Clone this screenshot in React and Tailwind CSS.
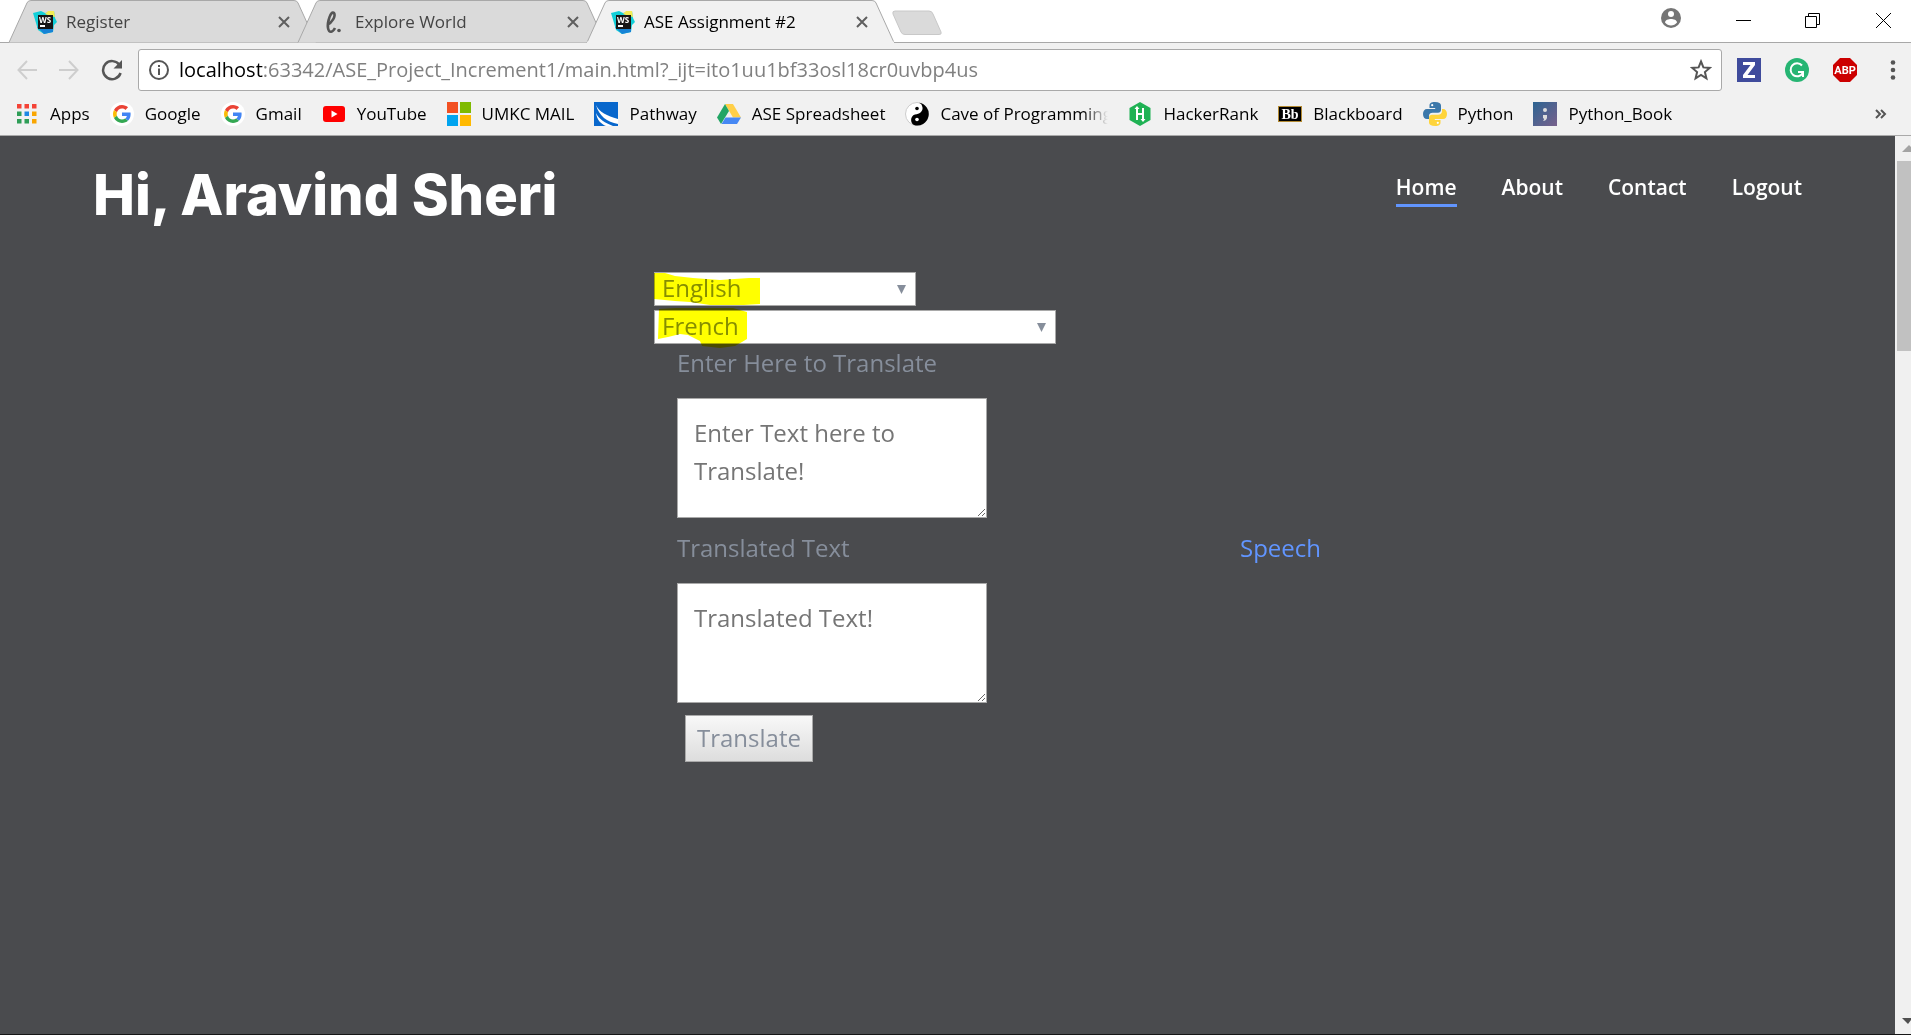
import React from "react";

function WebStormIcon() {
  return (
    <svg viewBox="0 0 24 24" className="size-6 shrink-0" aria-hidden="true">
      <path d="M0 3L8 1L12 3L21 1L22 8L24 12L21 15L20 22L11 24L5 20L3 13Z" fill="#12cfd8" />
      <path d="M12 4L15 1L21 1L22 7L18 6Z" fill="#f3ec54" />
      <path d="M4 17L11 24L20 22L20 16Z" fill="#1783d6" />
      <rect x="5" y="5" width="15" height="14" fill="#161616" />
      <text x="6" y="13" fontSize="8" fontWeight="bold" fontFamily="Open Sans, sans-serif" fill="#fff">WS</text>
      <rect x="7" y="15" width="5" height="2" fill="#fff" />
    </svg>
  );
}

function CloseX() {
  return (
    <svg viewBox="0 0 12 12" className="size-3" aria-hidden="true">
      <path d="M1 1L11 11M11 1L1 11" stroke="#5f5f5f" strokeWidth="2" fill="none" />
    </svg>
  );
}

function TabShape({ active }) {
  return (
    <svg viewBox="0 0 310 43" preserveAspectRatio="none" className="absolute inset-0 size-full" aria-hidden="true">
      <path d="M1 42.5L19 3Q20 .5 23 .5L287 .5Q290 .5 291 3L309 42.5" fill={active ? "#f1f1f1" : "#dadada"} stroke="#a8a8a8" />
      {active && <path d="M1 42.5H309" stroke="#f1f1f1" strokeWidth="2" />}
    </svg>
  );
}

function Tab({ title, icon, active }) {
  return (
    <div className={active ? "relative z-10 -ml-5 h-[43px] w-[309px]" : "relative -ml-5 h-[43px] w-[309px]"}>
      <TabShape active={active} />
      <div className="relative flex h-full items-center gap-[9px] pr-[27px] pl-[25px]">
        {icon}
        <span className={active ? "flex-1 text-[17px] text-black" : "flex-1 text-[17px] text-[#444]"}>{title}</span>
        <button type="button" aria-label={"Close " + title}><CloseX /></button>
      </div>
    </div>
  );
}

function TabStrip() {
  return (
    <div className="flex h-[43px] items-start border-b border-[#a8a8a8] bg-white pl-7">
      <Tab title="Register" icon={<WebStormIcon />} />
      <Tab
        title="Explore World"
        icon={
          <svg viewBox="0 0 24 24" className="size-6 shrink-0" aria-hidden="true">
            <path d="M5 15C10 13 14 6 12 3C9 0 5 12 6 18C7 24 11 22 13 18" fill="none" stroke="#555" strokeWidth="2.600" />
            <circle cx="17" cy="20.500" r="1.800" fill="#555" />
          </svg>
        }
      />
      <Tab title="ASE Assignment #2" icon={<WebStormIcon />} active />
      <button type="button" aria-label="New tab" className="mt-[10px] -ml-1">
        <svg viewBox="0 0 52 26" className="h-[26px] w-[52px]" aria-hidden="true">
          <path d="M4 1H38Q41 1 42 4L50 22Q51 24.500 48 24.500H14Q11 24.500 10 22L2 4Q1 1 4 1Z" fill="#dadada" stroke="#c8c8c8" />
        </svg>
      </button>
      <div className="ml-auto flex items-center">
        <button type="button" aria-label="Profile" className="mt-2 mr-[55px]">
          <svg viewBox="0 0 20 20" className="size-5" aria-hidden="true">
            <circle cx="10" cy="10" r="10" fill="#757575" />
            <circle cx="10" cy="6" r="3" fill="#fff" />
            <path d="M4 14.500C4 12 7.500 11 10 11S16 12 16 14.500C14.500 16.600 12.300 17.500 10 17.500S5.500 16.600 4 14.500Z" fill="#fff" />
          </svg>
        </button>
        <button type="button" aria-label="Minimize" className="mt-3 mr-[54px]">
          <svg viewBox="0 0 15 15" className="size-[15px]" aria-hidden="true"><path d="M0 7.500H15" stroke="#000" /></svg>
        </button>
        <button type="button" aria-label="Restore" className="mt-3 mr-14">
          <svg viewBox="0 0 15 15" className="size-[15px]" aria-hidden="true">
            <path d="M.5 3.500H11.500V14.500H.5ZM3.500 3.500V.5H14.500V11.500H11.500" fill="none" stroke="#000" />
          </svg>
        </button>
        <button type="button" aria-label="Close window" className="mt-3 mr-5">
          <svg viewBox="0 0 15 15" className="size-[15px]" aria-hidden="true"><path d="M0 0L15 15M15 0L0 15" stroke="#000" /></svg>
        </button>
      </div>
    </div>
  );
}

function Arrow({ label, d }) {
  return (
    <button type="button" aria-label={label}>
      <svg viewBox="0 0 20 20" className="size-5" aria-hidden="true">
        <path d={d} fill="none" stroke="#cecece" strokeWidth="2" />
      </svg>
    </button>
  );
}

function Toolbar() {
  return (
    <div className="flex items-center pt-[6px] pr-[10px] pl-[17px]">
      <div className="flex gap-[22px]">
        <Arrow label="Back" d="M10 1L1.500 10L10 19M2 10H20" />
        <Arrow label="Forward" d="M10 1L18.500 10L10 19M18 10H0" />
        <button type="button" aria-label="Reload">
          <svg viewBox="0 0 22 22" className="size-[22px]" aria-hidden="true">
            <path d="M18.500 6A9 9 0 1 0 19.600 14" fill="none" stroke="#555" strokeWidth="2.500" />
            <path d="M21 1V9.500H12.500Z" fill="#555" />
          </svg>
        </button>
      </div>
      <div className="ml-[15px] flex h-[42px] flex-1 items-center rounded-[3px] border border-[#a9a9a9] bg-white pr-[9px] pl-[10px]">
        <svg viewBox="0 0 20 20" className="size-5 shrink-0" aria-hidden="true">
          <circle cx="10" cy="10" r="9" fill="none" stroke="#555" strokeWidth="2" />
          <path d="M10 8.500V15M10 5V7" stroke="#555" strokeWidth="2" />
        </svg>
        <a href="#top" className="ml-[10px] flex-1 text-xl text-[#808080]">
          <span className="text-black">localhost</span>:63342/ASE_Project_Increment1/main.html?_ijt=ito1uu1bf33osl18cr0uvbp4us
        </a>
        <button type="button" aria-label="Bookmark this page">
          <svg viewBox="0 0 22 22" className="size-[22px]" aria-hidden="true">
            <path d="M11 2.500L13.400 8.400L19.800 8.900L14.900 13L16.400 19.300L11 15.900L5.600 19.300L7.100 13L2.200 8.900L8.600 8.400Z" fill="none" stroke="#555" strokeWidth="2" />
          </svg>
        </button>
      </div>
      <div className="ml-[15px] flex items-center gap-6">
        <button type="button" aria-label="Zotero">
          <svg viewBox="0 0 24 24" className="size-6" aria-hidden="true">
            <rect width="24" height="24" fill="#3f4b9c" />
            <path d="M6 4H18V7L10.500 17H18V20H6V17L13.500 7H6Z" fill="#fff" />
          </svg>
        </button>
        <button type="button" aria-label="Grammarly">
          <svg viewBox="0 0 24 24" className="size-6" aria-hidden="true">
            <circle cx="12" cy="12" r="12" fill="#26b573" />
            <path d="M17 7.500A6.500 6.500 0 1 0 17.800 15M13 14H18V19" fill="none" stroke="#fff" strokeWidth="2" />
          </svg>
        </button>
        <button type="button" aria-label="Adblock Plus">
          <svg viewBox="0 0 24 24" className="size-6" aria-hidden="true">
            <path d="M7 0H17L24 7V17L17 24H7L0 17V7Z" fill="#cc0000" />
            <text x="12" y="16" textAnchor="middle" fontSize="11" fontWeight="bold" fontFamily="Roboto, sans-serif" fill="#fff">ABP</text>
          </svg>
        </button>
        <button type="button" aria-label="Menu" className="ml-1">
          <svg viewBox="0 0 16 24" className="h-6 w-4" aria-hidden="true">
            <g fill="#555"><circle cx="8" cy="4.500" r="2.300" /><circle cx="8" cy="12" r="2.300" /><circle cx="8" cy="19.500" r="2.300" /></g>
          </svg>
        </button>
      </div>
    </div>
  );
}

function GoogleIcon() {
  return (
    <>
      <circle cx="12" cy="12" r="12" fill="#fff" />
      <g transform="translate(3 3) scale(.375)">
        <path fill="#EA4335" d="M24 9.500c3.540 0 6.710 1.220 9.210 3.600l6.850-6.850C35.900 2.380 30.470 0 24 0 14.620 0 6.510 5.380 2.560 13.220l7.980 6.190C12.430 13.720 17.740 9.500 24 9.500z" />
        <path fill="#4285F4" d="M46.980 24.550c0-1.570-.15-3.090-.38-4.550H24v9.020h12.940c-.58 2.960-2.260 5.480-4.780 7.180l7.730 6c4.510-4.180 7.090-10.360 7.090-17.650z" />
        <path fill="#FBBC05" d="M10.530 28.590c-.48-1.450-.76-2.990-.76-4.590s.27-3.140.76-4.590l-7.980-6.190C.92 16.460 0 20.120 0 24c0 3.880.92 7.540 2.560 10.780l7.970-6.190z" />
        <path fill="#34A853" d="M24 48c6.480 0 11.930-2.130 15.890-5.810l-7.730-6c-2.150 1.450-4.920 2.300-8.160 2.300-6.260 0-11.570-4.220-13.470-9.910l-7.980 6.190C6.510 42.620 14.620 48 24 48z" />
      </g>
    </>
  );
}

const bookmarks = [
  {
    label: "Apps",
    icon: (
      <g>
        <path d="M2 2h4.500v4.500H2zM9.500 2H14v4.500H9.500zM17 2h4.500v4.500H17z" fill="#f44336" />
        <path d="M2 9.500h4.500V14H2zM2 17h4.500v4.500H2zM9.500 17H14v4.500H9.500z" fill="#2f9e57" />
        <path d="M9.500 9.500H14V14H9.500z" fill="#1e88e5" />
        <path d="M17 9.500h4.500V14H17zM17 17h4.500v4.500H17z" fill="#f9a602" />
      </g>
    ),
  },
  { label: "Google", icon: <GoogleIcon /> },
  { label: "Gmail", icon: <GoogleIcon /> },
  {
    label: "YouTube",
    icon: (
      <g>
        <rect x="1" y="4" width="22" height="16" rx="3" fill="#f00" />
        <path d="M9.500 8.500L15.500 12L9.500 15.500Z" fill="#fff" />
      </g>
    ),
  },
  {
    label: "UMKC MAIL",
    icon: (
      <g>
        <path d="M0 0H11V11H0Z" fill="#f25022" />
        <path d="M13 0H24V11H13Z" fill="#7fba00" />
        <path d="M0 13H11V24H0Z" fill="#00a4ef" />
        <path d="M13 13H24V24H13Z" fill="#ffb900" />
      </g>
    ),
  },
  {
    label: "Pathway",
    icon: (
      <g>
        <rect width="24" height="24" fill="#0867cc" />
        <path d="M2 3C5 10 13 14 24 17V22C13 20 5 14 2 3Z" fill="#fff" />
        <path d="M2 11C5 17 11 21 19 24H12C7 22 3 18 2 11Z" fill="#fff" />
      </g>
    ),
  },
  {
    label: "ASE Spreadsheet",
    icon: (
      <g>
        <path d="M8 2H16L24 15.500H16Z" fill="#ffcf48" />
        <path d="M8 2L12 9L4 22L0 15.500Z" fill="#22a565" />
        <path d="M8.500 15.500H24L20 22H4.500Z" fill="#4688f4" />
      </g>
    ),
  },
  {
    label: "Cave of Programming",
    faded: true,
    icon: (
      <g>
        <circle cx="12" cy="12" r="11.500" fill="#fff" stroke="#ccc" />
        <path d="M14 .7A11.500 11.500 0 1 1 9 23.100C5 21 5 14 10 12.500C15 12 18 9 17.500 5.500C17 2.500 16 1.500 14 .7Z" fill="#000" />
        <circle cx="12" cy="6.500" r="1.800" fill="#000" />
        <circle cx="12" cy="17.500" r="1.800" fill="#fff" />
      </g>
    ),
  },
  {
    label: "HackerRank",
    icon: (
      <g>
        <path d="M12 0L22.500 6V18L12 24L1.500 18V6Z" fill="#1fb254" />
        <path d="M9 5V18M15 6V19M9 12H15" stroke="#fff" strokeWidth="2" />
        <path d="M6.500 7L9 4L11.500 7ZM12.500 17L15 20L17.500 17Z" fill="#fff" />
      </g>
    ),
  },
  {
    label: "Blackboard",
    icon: (
      <g>
        <rect x=".5" y="4.500" width="23" height="15" fill="#000" stroke="#b48b33" />
        <text x="12" y="17" textAnchor="middle" fontSize="14" fontWeight="bold" fontFamily="Liberation Serif, serif" fill="#fff">Bb</text>
      </g>
    ),
  },
  {
    label: "Python",
    icon: (
      <g>
        <path d="M11.900 0C8 0 6.500 1.300 6.500 3.500V6H12.200V7H4C1.500 7 0 9 0 12S1.500 17 4 17H6V14C6 12 7.500 10.800 9.500 10.800H15C16.700 10.800 18 9.500 18 7.800V3.500C18 1.300 16 0 11.900 0Z" fill="#3c78aa" />
        <path d="M12.100 24C16 24 17.500 22.700 17.500 20.500V18H11.800V17H20C22.500 17 24 15 24 12S22.500 7 20 7H19V9.500C19 11.500 17 12.800 15 12.800H9C7.300 12.800 6 14 6 16V20.500C6 22.700 8 24 12.100 24Z" fill="#fed43b" />
        <circle cx="9.200" cy="3.200" r="1.100" fill="#fff" />
        <circle cx="14.800" cy="20.800" r="1.100" fill="#fff" />
      </g>
    ),
  },
  {
    label: "Python_Book",
    icon: (
      <g>
        <defs>
          <linearGradient id="book" x1="0" y1="0" x2="1" y2="1">
            <stop stopColor="#2c6492" /><stop offset="1" stopColor="#79618c" />
          </linearGradient>
        </defs>
        <rect width="24" height="24" fill="url(#book)" />
        <circle cx="12" cy="8" r="2" fill="#ddd" />
        <path d="M10 13H14V16Q13 19 10 19Q12 17 10 16Z" fill="#ddd" />
      </g>
    ),
  },
];

function BookmarksBar() {
  return (
    <nav aria-label="Bookmarks" className="flex h-[45px] items-center border-b border-[#a9a9a9] pt-px pr-6 pl-[15px]">
      <ul className="flex items-center gap-5">
        {bookmarks.map((b) => (
          <li key={b.label}>
            <a href="#top" className="flex items-center gap-[11px] text-[17px] text-black">
              <svg viewBox="0 0 24 24" className="size-6 shrink-0" aria-hidden="true">{b.icon}</svg>
              <span className={b.faded ? "w-[168px] overflow-hidden whitespace-nowrap [mask-image:linear-gradient(to_right,black_85%,transparent)]" : "whitespace-nowrap"}>
                {b.label}
              </span>
            </a>
          </li>
        ))}
      </ul>
      <button type="button" aria-label="More bookmarks" className="ml-auto">
        <svg viewBox="0 0 12 12" className="size-3" aria-hidden="true">
          <path d="M1 2L5 6L1 10M6 2L10 6L6 10" fill="none" stroke="#555" strokeWidth="2" />
        </svg>
      </button>
    </nav>
  );
}

function LanguageSelect({ label, options, boxClass, highlight }) {
  return (
    <div className={boxClass}>
      <select aria-label={label} className="h-full w-full appearance-none border border-[#a9a9a9] bg-white pb-[2px] pl-[7px] text-2xl leading-[30px] text-[#868e9b]">
        {options.map((o) => <option key={o}>{o}</option>)}
      </select>
      <svg viewBox="0 0 10 9" className="pointer-events-none absolute top-[13px] right-[9px] h-[9px] w-[10px]" aria-hidden="true">
        <path d="M0 0H9L4.500 9Z" fill="#868e9b" />
      </svg>
      <svg viewBox="0 0 110 40" className="pointer-events-none absolute -top-[2px] left-0 h-10 w-[110px] mix-blend-multiply" aria-hidden="true">
        <path d={highlight} fill="#ff0" />
      </svg>
    </div>
  );
}

function TextBox({ id, label, placeholder }) {
  return (
    <div className="flex flex-col">
      <label htmlFor={id} className="mb-4 text-2xl leading-[38px]">{label}</label>
      <textarea id={id} placeholder={placeholder} className="h-[120px] w-[310px] resize border border-[#a9a9a9] bg-white px-4 py-[15px] text-2xl leading-[38px] placeholder:text-[#757575]" />
    </div>
  );
}

function Page() {
  return (
    <div className="flex-1 bg-[#4a4b4e] text-[#868e9b]">
      <header className="flex items-start justify-between pt-[26px] pr-[93px] pl-[93px]">
        <h1 className="font-['Inter'] text-[56px] leading-[66px] font-extrabold text-white">Hi, Aravind Sheri</h1>
        <nav aria-label="Main">
          <ul className="flex gap-[45px] pt-[10px] text-[21px] leading-[30px] font-semibold text-white">
            <li><a href="#home" className="block border-b-[3px] border-[#6195ff] pb-[2px]">Home</a></li>
            <li><a href="#about" className="block">About</a></li>
            <li><a href="#contact" className="block">Contact</a></li>
            <li><a href="#logout" className="block">Logout</a></li>
          </ul>
        </nav>
      </header>
      <form className="ml-[654px] pt-11" onSubmit={(e) => e.preventDefault()}>
        <LanguageSelect
          label="From language"
          options={["English", "French", "Spanish"]}
          boxClass="relative h-[34px] w-[262px]"
          highlight="M0 3H11L21 6L39 8L66 10L95 8H106V34L90 35H56L36 32L21 31L0 29Z"
        />
        <LanguageSelect
          label="To language"
          options={["French", "English", "Spanish"]}
          boxClass="relative mt-1 h-[34px] w-[402px]"
          highlight="M5 1L22 0H79L93 4V31L88 34L81 38L66 40L48 38L46 33L34 27L26 26L14 29L4 31Z"
        />
        <div className="pl-[23px]">
          <TextBox id="source" label="Enter Here to Translate" placeholder="Enter Text here to Translate!" />
          <div className="mt-[11px] flex">
            <TextBox id="target" label="Translated Text" placeholder="Translated Text!" />
            <a href="#speech" className="ml-[253px] text-2xl leading-[38px] text-[#6195ff]">Speech</a>
          </div>
          <button type="submit" className="mt-3 ml-2 h-[47px] border border-[#a9a9a9] bg-linear-to-b from-[#f8f8f8] to-[#dddddd] px-[11px] pb-[2px] text-2xl">Translate</button>
        </div>
      </form>
    </div>
  );
}

function ScrollBar() {
  return (
    <div className="flex w-4 flex-col items-end bg-[#f0f0f0]" aria-hidden="true">
      <svg viewBox="0 0 9 25" className="h-[25px] w-[9px]"><path d="M0 16L7 9L9 11V16Z" fill="#a3a3a3" /></svg>
      <div className="h-[190px] w-[14px] bg-[#c1c1c1]" />
      <svg viewBox="0 0 9 25" className="mt-auto h-[25px] w-[9px]"><path d="M0 9H9V11L6 15Z" fill="#505050" /></svg>
    </div>
  );
}

export default function App() {
  return (
    <div id="top" className="flex min-h-screen flex-col border-b border-[#161616] bg-[#f1f1f1] font-['Open_Sans',sans-serif]">
      <TabStrip />
      <Toolbar />
      <BookmarksBar />
      <main className="flex flex-1">
        <Page />
        <ScrollBar />
      </main>
    </div>
  );
}
